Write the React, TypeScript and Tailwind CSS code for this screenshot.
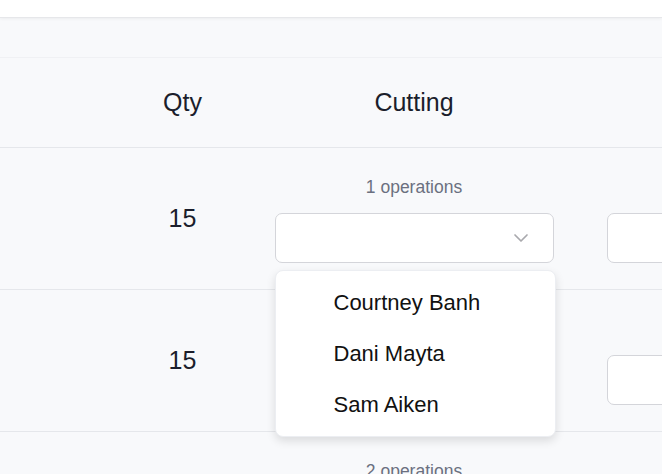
import { ChevronDown } from "lucide-react";

const rows = [
  { qty: 15, ops: 1, open: true },
  { qty: 15, ops: 1, open: false },
  { qty: 15, ops: 2, open: false },
];

const people = ["Courtney Banh", "Dani Mayta", "Sam Aiken"];

function Select({ open }: { open?: boolean }) {
  return (
    <div className="relative w-[279px]">
      <div className="h-[50px] rounded-[7px] border border-[#d4d5da] bg-white flex items-center justify-end pr-[20px]">
        <ChevronDown className="w-[24px] h-[24px] text-[#a9a9ad]" strokeWidth={1.7} />
      </div>
      {open && (
        <div className="absolute left-0 top-[57px] z-10 w-[281px] rounded-[8px] border border-[#eceef2] bg-white py-[6px] shadow-[0_4px_10px_rgba(0,0,0,0.12)]">
          {people.map((p) => (
            <div key={p} className="h-[51px] flex items-center pl-[58px] text-[22px] text-[#111111]">
              {p}
            </div>
          ))}
        </div>
      )}
    </div>
  );
}

export default function App() {
  return (
    <div
      className="w-[662px] h-[474px] overflow-hidden bg-[#f8f9fb]"
      style={{ fontFamily: '"Liberation Sans", Arial, sans-serif' }}
    >
      <div className="h-[18px] bg-white border-b border-[#e6e7ea] shadow-[0_1px_3px_rgba(0,0,0,0.05)]" />
      <div className="h-[40px] border-b border-[#f0f1f4]" />
      <div className="flex h-[90px] border-b border-[#e5e7eb] text-[25px] text-[#1b1e2c]">
        <div className="w-[117px] shrink-0" />
        <div className="w-[131px] shrink-0 flex items-center justify-center">Qty</div>
        <div className="w-[332px] shrink-0 flex items-center justify-center">Cutting</div>
        <div className="w-[332px] shrink-0" />
      </div>
      {rows.map((r, i) => (
        <div key={i} className="flex h-[142px] border-b border-[#e5e7eb]">
          <div className="w-[117px] shrink-0" />
          <div className="w-[131px] shrink-0 flex items-center justify-center text-[25px] text-[#1b1e2c]">
            {r.qty}
          </div>
          <div className="w-[332px] shrink-0 flex flex-col items-center justify-center gap-[16px] pt-[3px]">
            <span className="text-[17.5px] leading-[20px] text-[#6b7080]">{r.ops} operations</span>
            <Select open={r.open} />
          </div>
          <div className="w-[332px] shrink-0 flex flex-col justify-center pl-[27px] pt-[38px]">
            <div className="h-[50px] w-[279px] rounded-[7px] border border-[#d4d5da] bg-white" />
          </div>
        </div>
      ))}
    </div>
  );
}
